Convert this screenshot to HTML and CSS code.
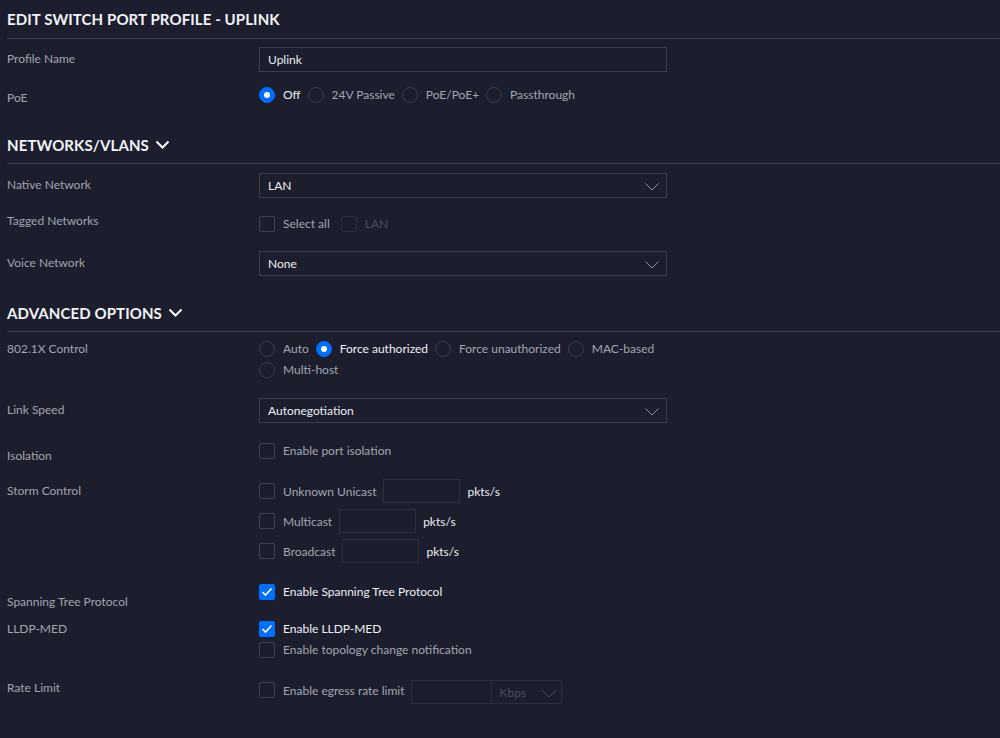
FILE: index.html
```html
<!DOCTYPE html>
<html>
<head>
<meta charset="utf-8">
<link rel="stylesheet" href="styles.css">
</head>
<body>
<div class="page">
  <h1 class="title">EDIT SWITCH PORT PROFILE - UPLINK</h1>

  <div class="row mt8">
    <div class="label lh25">Profile Name</div>
    <div class="ctrl"><div class="input">Uplink</div></div>
  </div>

  <div class="row mt15">
    <div class="label lh16 off3">PoE</div>
    <div class="ctrl">
      <div class="options">
        <span class="opt"><span class="radio on"></span><span class="txt on">Off</span></span>
        <span class="opt"><span class="radio"></span><span class="txt">24V Passive</span></span>
        <span class="opt"><span class="radio"></span><span class="txt">PoE/PoE+</span></span>
        <span class="opt"><span class="radio"></span><span class="txt">Passthrough</span></span>
      </div>
    </div>
  </div>

  <h2 class="section mt24">NETWORKS/VLANS <svg class="hchev" width="15" height="9" viewBox="0 0 15 9"><path d="M1.5 1.5 L7.5 7.5 L13.5 1.5" fill="none" stroke="#fff" stroke-width="2"/></svg></h2>

  <div class="row mt9">
    <div class="label lh25">Native Network</div>
    <div class="ctrl"><div class="input select">LAN<svg class="chev" width="14" height="8" viewBox="0 0 14 8"><path d="M0.5 0.5 L7 7 L13.5 0.5" fill="none" stroke="#8d909b" stroke-width="1"/></svg></div></div>
  </div>

  <div class="row mt18">
    <div class="label lh16 offm3">Tagged Networks</div>
    <div class="ctrl">
      <div class="options">
        <span class="opt"><span class="check"></span><span class="txt">Select all</span></span>
        <span class="opt disabled"><span class="check"></span><span class="txt">LAN</span></span>
      </div>
    </div>
  </div>

  <div class="row mt19">
    <div class="label lh25">Voice Network</div>
    <div class="ctrl"><div class="input select">None<svg class="chev" width="14" height="8" viewBox="0 0 14 8"><path d="M0.5 0.5 L7 7 L13.5 0.5" fill="none" stroke="#8d909b" stroke-width="1"/></svg></div></div>
  </div>

  <h2 class="section mt19">ADVANCED OPTIONS <svg class="hchev" width="15" height="9" viewBox="0 0 15 9"><path d="M1.5 1.5 L7.5 7.5 L13.5 1.5" fill="none" stroke="#fff" stroke-width="2"/></svg></h2>

  <div class="row mt9">
    <div class="label lh16">802.1X Control</div>
    <div class="ctrl">
      <div class="options wrap">
        <span class="opt"><span class="radio"></span><span class="txt">Auto</span></span>
        <span class="opt"><span class="radio on"></span><span class="txt on">Force authorized</span></span>
        <span class="opt"><span class="radio"></span><span class="txt">Force unauthorized</span></span>
        <span class="opt"><span class="radio"></span><span class="txt">MAC-based</span></span>
        <span class="opt"><span class="radio"></span><span class="txt">Multi-host</span></span>
      </div>
    </div>
  </div>

  <div class="row mt20">
    <div class="label lh25">Link Speed</div>
    <div class="ctrl"><div class="input select">Autonegotiation<svg class="chev" width="14" height="8" viewBox="0 0 14 8"><path d="M0.5 0.5 L7 7 L13.5 0.5" fill="none" stroke="#8d909b" stroke-width="1"/></svg></div></div>
  </div>

  <div class="row mt20">
    <div class="label lh16 off5">Isolation</div>
    <div class="ctrl">
      <div class="options"><span class="opt"><span class="check"></span><span class="txt">Enable port isolation</span></span></div>
    </div>
  </div>

  <div class="row mt20">
    <div class="label lh24">Storm Control</div>
    <div class="ctrl stack6">
      <div class="line"><span class="check"></span><span class="txt">Unknown Unicast</span><span class="small-input"></span><span class="unit">pkts/s</span></div>
      <div class="line"><span class="check"></span><span class="txt">Multicast</span><span class="small-input"></span><span class="unit">pkts/s</span></div>
      <div class="line"><span class="check"></span><span class="txt">Broadcast</span><span class="small-input"></span><span class="unit">pkts/s</span></div>
    </div>
  </div>

  <div class="row mt21">
    <div class="label lh16 off10">Spanning Tree Protocol</div>
    <div class="ctrl">
      <div class="options"><span class="opt"><span class="check on"><svg width="12" height="10" viewBox="0 0 12 10"><path d="M1.5 5 L4.5 8 L10.5 1.5" fill="none" stroke="#fff" stroke-width="1.6"/></svg></span><span class="txt on">Enable Spanning Tree Protocol</span></span></div>
    </div>
  </div>

  <div class="row mt21">
    <div class="label lh16">LLDP-MED</div>
    <div class="ctrl stack5">
      <div class="options"><span class="opt"><span class="check on"><svg width="12" height="10" viewBox="0 0 12 10"><path d="M1.5 5 L4.5 8 L10.5 1.5" fill="none" stroke="#fff" stroke-width="1.6"/></svg></span><span class="txt on">Enable LLDP-MED</span></span></div>
      <div class="options"><span class="opt"><span class="check"></span><span class="txt">Enable topology change notification</span></span></div>
    </div>
  </div>

  <div class="row mt22">
    <div class="label lh24 offm4">Rate Limit</div>
    <div class="ctrl">
      <div class="line"><span class="check offm2"></span><span class="txt offm2">Enable egress rate limit</span><span class="rate-input"></span><span class="rate-select">Kbps<svg class="chev" width="14" height="8" viewBox="0 0 14 8"><path d="M0.5 0.5 L7 7 L13.5 0.5" fill="none" stroke="#4a4d59" stroke-width="1"/></svg></span></div>
    </div>
  </div>
</div>
</body>
</html>
```

FILE: styles.css
```css
* { box-sizing: border-box; }
html, body {
  margin: 0;
  padding: 0;
  background: #1c1e2d;
  height: 100%;
}
body {
  font-family: Lato, "Noto Sans", "Liberation Sans", sans-serif;
  font-size: 12px;
  color: #e3e4e8;
  overflow: hidden;
}
.page {
  padding-left: 7px;
}
.title, .section {
  margin: 0;
  font-size: 15px;
  font-weight: 700;
  color: #f2f3f5;
  letter-spacing: 0.1px;
  display: flex;
  align-items: center;
  border-bottom: 1px solid #3a3d4b;
}
.title { height: 39px; padding-bottom: 0; }
.section { height: 37px; padding-bottom: 0; }
.hchev { margin-left: 6px; margin-top: -1px; }

.mt8 { margin-top: 8px; }
.mt9 { margin-top: 9px; }
.mt15 { margin-top: 15px; }
.mt18 { margin-top: 18px; }
.mt19 { margin-top: 19px; }
.mt20 { margin-top: 20px; }
.mt21 { margin-top: 21px; }
.mt22 { margin-top: 22px; }
.mt24 { margin-top: 24px; }

.row {
  display: grid;
  grid-template-columns: 252px 408px;
  align-items: start;
}
.label {
  color: #a2a5ae;
  white-space: nowrap;
}
.lh25 { line-height: 24px; }
.lh24 { line-height: 24px; }
.lh16 { line-height: 16px; }
.off3 { position: relative; top: 3px; }
.off5 { position: relative; top: 5px; }
.off10 { position: relative; top: 10px; }
.offm3 { position: relative; top: -3px; }
.offm4 { position: relative; top: -4px; }
.offm2 { position: relative; top: -2px; }

.input {
  height: 25px;
  border: 1px solid #3b3e4c;
  padding: 0 8px;
  line-height: 23px;
  color: #eceef1;
  display: flex;
  align-items: center;
  justify-content: space-between;
}
.chev { margin-right: -1px; margin-top: 2px; }

.options {
  display: flex;
  align-items: center;
  column-gap: 7px;
  line-height: 16px;
}
.options.wrap { flex-wrap: wrap; row-gap: 5px; }
.opt {
  display: inline-flex;
  align-items: center;
  gap: 8px;
  white-space: nowrap;
}
.txt { color: #a3a6ae; }
.txt.on { color: #eef0f3; }

.radio {
  width: 16px;
  height: 16px;
  border-radius: 50%;
  border: 1px solid #393c4a;
  display: inline-flex;
  align-items: center;
  justify-content: center;
  flex: none;
}
.radio.on {
  background: #006fff;
  border-color: #006fff;
}
.radio.on::after {
  content: "";
  width: 6px;
  height: 6px;
  border-radius: 50%;
  background: #fff;
}

.check {
  width: 16px;
  height: 16px;
  border: 1px solid #40434f;
  border-radius: 2px;
  display: inline-flex;
  align-items: center;
  justify-content: center;
  flex: none;
}
.check.on {
  background: #006fff;
  border-color: #006fff;
}
.disabled .check { border-color: #2c2f3c; }
.disabled .txt { color: #4a4d5a; }
.opt.disabled { margin-left: 4px; }

.stack6 { display: flex; flex-direction: column; gap: 6px; }
.stack5 { display: flex; flex-direction: column; gap: 5px; }
.line {
  display: flex;
  align-items: center;
  height: 24px;
  white-space: nowrap;
}
.line .check { margin-right: 8px; }
.small-input {
  width: 77px;
  height: 24px;
  border: 1px solid #2d303d;
  margin-left: 7px;
}
.unit {
  margin-left: 7px;
  color: #eceef1;
}
.rate-input {
  width: 81px;
  height: 24px;
  border: 1px solid #2b2e3b;
  margin-left: 7px;
}
.rate-select {
  width: 70px;
  height: 24px;
  border: 1px solid #2b2e3b;
  border-left: none;
  color: #4a4d5a;
  display: flex;
  align-items: center;
  justify-content: space-between;
  padding: 0 6px 0 7px;
}
.rate-select .chev { margin-top: 3px; }
```
